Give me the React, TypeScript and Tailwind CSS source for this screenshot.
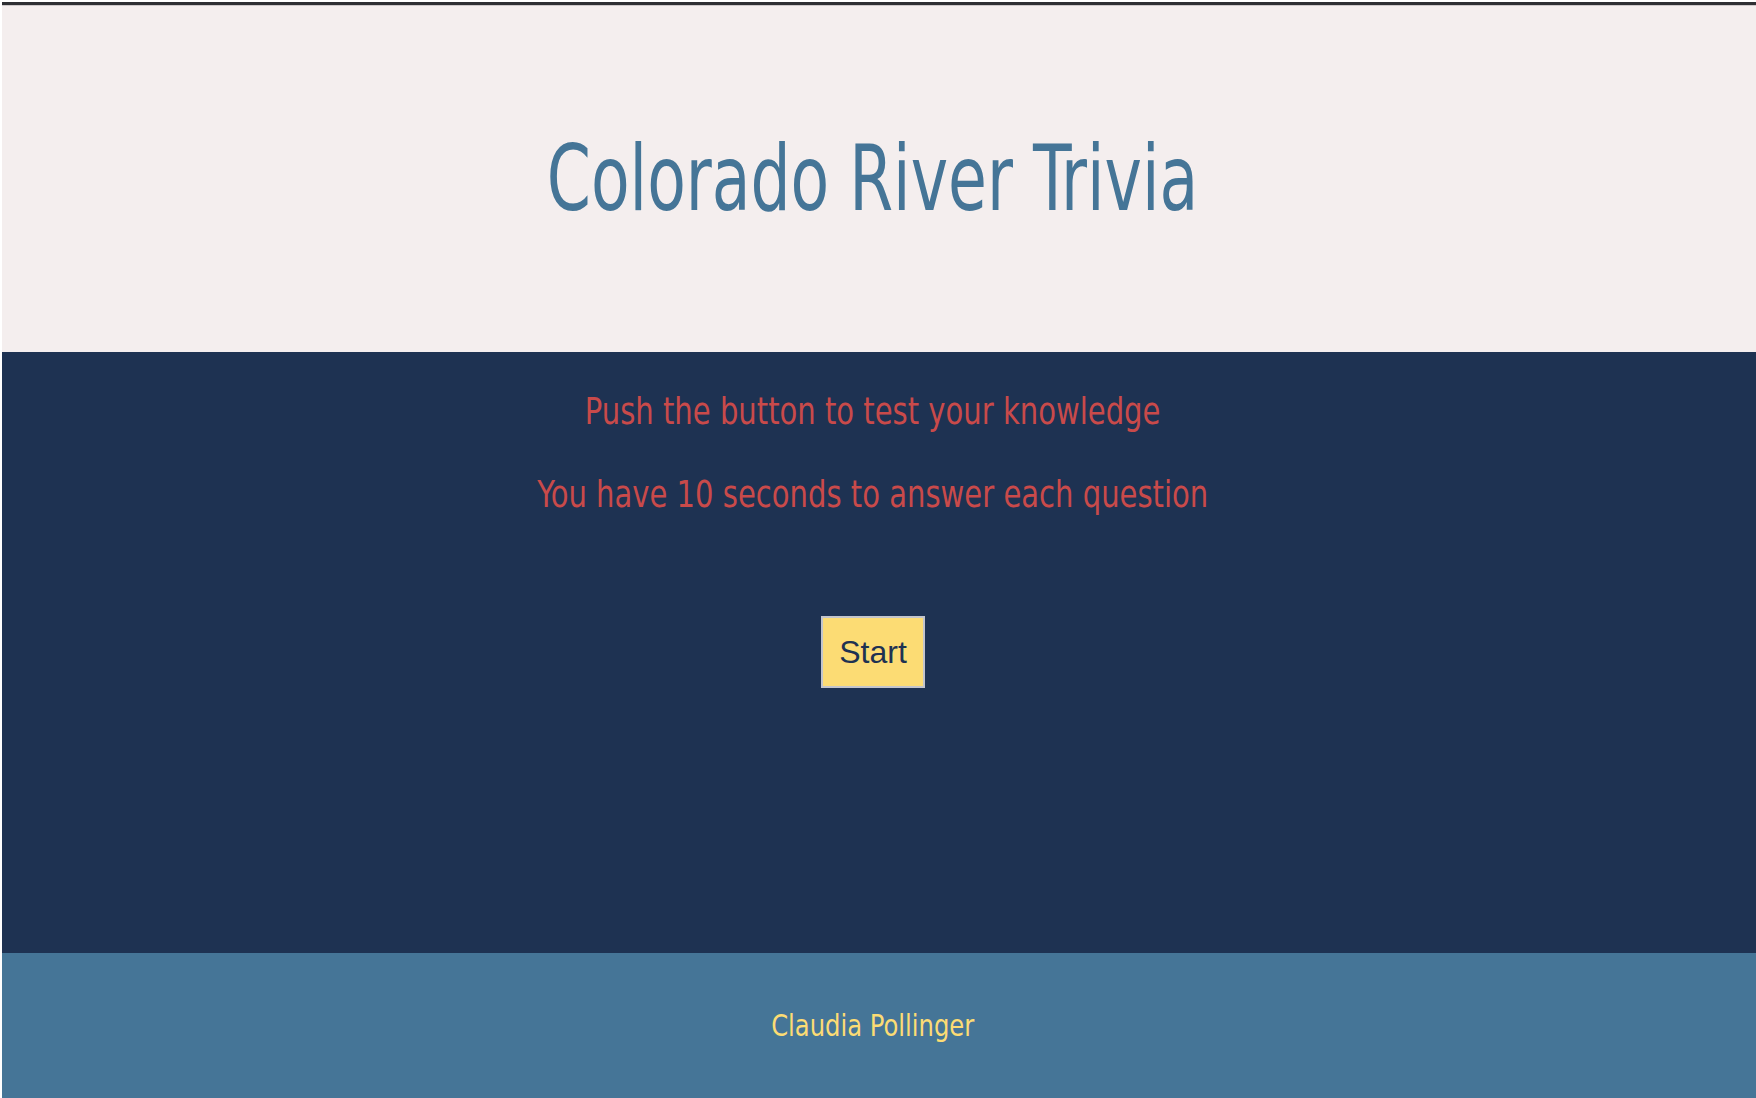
import React from "react";

const dosis = {
  fontFamily: '"DejaVu Sans Condensed", "Liberation Sans Narrow", "DejaVu Sans", sans-serif',
};

export default function App() {
  return (
    <div className="w-[1756px] h-[1098px] bg-white pt-[2px] pl-[2px] overflow-hidden">
      <div className="h-[3px] bg-[#2e2f33]" />
      <div className="h-[1px] bg-[#cdc8c9]" />
      <header className="h-[346px] bg-[#f4eeee] flex items-center justify-center pr-[12px]">
        <h1
          style={dosis}
          className="text-[90px] leading-none text-[#457597] font-normal scale-x-[0.78] whitespace-nowrap"
        >
          Colorado River Trivia
        </h1>
      </header>
      <main className="h-[601px] bg-[#1e3252] flex flex-col items-center pt-[37px] pr-[12px]">
        <p
          style={dosis}
          className="text-[38px] leading-[44px] text-[#c94a4a] scale-x-[0.85] whitespace-nowrap"
        >
          Push the button to test your knowledge
        </p>
        <p
          style={dosis}
          className="mt-[39px] text-[38px] leading-[44px] text-[#c94a4a] scale-x-[0.85] whitespace-nowrap"
        >
          You have 10 seconds to answer each question
        </p>
        <button
          className="mt-[100px] w-[104px] h-[72px] bg-[#fcdc74] border-2 border-[#c3c5cc] flex items-center justify-center text-[32px] text-[#1e3252]"
          style={{ fontFamily: '"Liberation Sans", Arial, sans-serif' }}
        >
          Start
        </button>
      </main>
      <footer className="h-[145px] bg-[#457597] flex items-center justify-center pr-[12px]">
        <span
          style={dosis}
          className="text-[31px] leading-none text-[#fcdc74] scale-x-[0.87] whitespace-nowrap"
        >
          Claudia Pollinger
        </span>
      </footer>
    </div>
  );
}
